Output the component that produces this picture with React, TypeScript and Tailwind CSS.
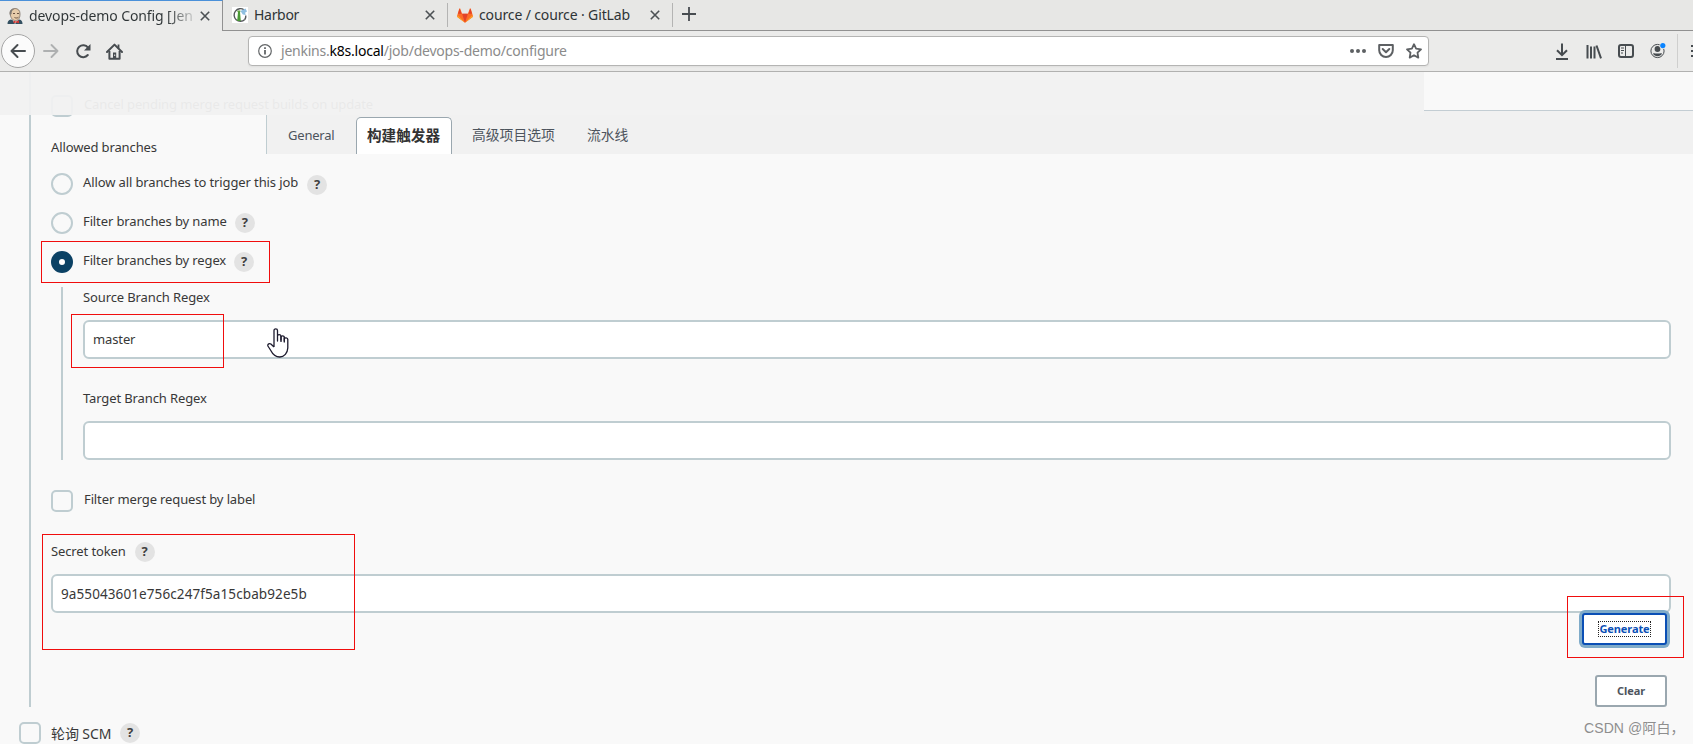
import React from 'react';
import clsx from 'clsx';

const CloseIcon = () => (
  <svg className="w-[10px] h-[10px] shrink-0" viewBox="0 0 10 10" fill="none" stroke="#4c5154" strokeWidth="1.6">
    <path d="M.8.8l8.4 8.4M9.2.8L.8 9.2" />
  </svg>
);

const JenkinsIcon = () => (
  <svg className="w-4 h-4 shrink-0" viewBox="0 0 16 16">
    <path d="M.5 16c0-2.500 1-4 3.500-4.500L8 13l4.500-1.500c2 .5 3 2 3 4.500z" fill="#335061" />
    <path d="M5 11l3 5 3-4-1-2z" fill="#fff" />
    <path d="M3 5C3 2 5 .5 8 .5S13.200 2.500 13 6c0 4-1.500 6.500-4.500 6.500S3.500 10 3 5z" fill="#e6cba9" stroke="#6b5f55" strokeWidth=".7" />
    <path d="M3 7C2 3 4 .8 7.500 1 5 2.200 4.500 3.500 4.600 6z" fill="#7d7873" />
    <path d="M6 5.500h2M10 5.500h2M7.500 9.500c1.500.8 3 .6 4-.3" stroke="#5a4336" strokeWidth=".9" fill="none" />
    <path d="M6.500 12.500l2.500 1 3-1.200v3L9 14.500l-2.500.8z" fill="#d33833" />
  </svg>
);

const HarborIcon = () => (
  <svg className="w-4 h-4 shrink-0 bg-white" viewBox="0 0 16 16">
    <path d="M12.800 12.500A6.300 6.300 0 1 1 12 2.800" fill="none" stroke="#55595b" strokeWidth="1.400" />
    <path d="M13.800 8.500a6 6 0 0 1-1 4" fill="none" stroke="#55595b" strokeWidth="1.400" />
    <path d="M6 5h2l.8 9H5.200z" fill="#4a9a35" />
    <path d="M5.400 3.500h3v1.600h-3z" fill="#5c9f3c" />
    <path d="M8.500 4l5-2.500 1.500 3-2 1.200.8 2.300-3-.5z" fill="#8fbfe0" />
  </svg>
);

const GitlabIcon = () => (
  <svg className="w-4 h-[15px] shrink-0" viewBox="0 0 16 15">
    <path d="M8 14.700L.3 9 .1 7.800 2.300.6h.9L5.100 5.800h5.800L12.800.6h.9l2.200 7.200-.2 1.200z" fill="#fc6d26" />
    <path d="M8 14.700L5.100 5.800h5.800z" fill="#e24329" />
    <path d="M8 14.700L.3 9l.5-1.800zM8 14.700L15.700 9l-.5-1.800z" fill="#fca326" />
    <path d="M1 5.800L2.600.5l2 5.300zM15 5.800L13.400.5l-2 5.300z" fill="#e24329" />
  </svg>
);

const BackIcon = () => (
  <svg className="w-4 h-4" viewBox="0 0 16 16" fill="none" stroke="currentColor" strokeWidth="2" strokeLinecap="round" strokeLinejoin="round">
    <path d="M15 8H1.500M7.500 2L1.500 8l6 6" />
  </svg>
);

const ForwardIcon = () => (
  <svg className="w-4 h-4" viewBox="0 0 16 16" fill="none" stroke="currentColor" strokeWidth="1.900" strokeLinecap="round" strokeLinejoin="round">
    <path d="M1 8h13.500M8.500 2l6 6-6 6" />
  </svg>
);

const ReloadIcon = () => (
  <svg className="w-4 h-4" viewBox="0 0 16 16" fill="none" stroke="#474c50" strokeWidth="2">
    <path d="M12.800 12A6 6 0 1 1 13 4.600" strokeLinecap="round" />
    <path d="M15.500 1v6.500H9z" fill="#474c50" stroke="none" />
  </svg>
);

const HomeIcon = () => (
  <svg className="w-[17px] h-[17px]" viewBox="0 0 17 17" fill="none" stroke="#474c50" strokeWidth="2" strokeLinejoin="round">
    <path d="M1 9l7.500-7.400L16 9" strokeLinecap="round" />
    <path d="M3.400 8v7.800h10.200V8" />
    <path d="M12.500 1.500v4" strokeWidth="1.800" />
    <path d="M7 15.500V9.500h3.200v6z" fill="#474c50" stroke="none" />
    <path d="M8.200 11.500h1v1.500h-1z" fill="#ebebea" stroke="none" />
  </svg>
);

const InfoIcon = () => (
  <svg className="w-[14px] h-[14px] shrink-0" viewBox="0 0 14 14" fill="none" stroke="#636668" strokeWidth="1.200">
    <circle cx="7" cy="7" r="6.300" />
    <path d="M7 6v4.500M7 3.200V5" strokeWidth="1.800" />
  </svg>
);

const PocketIcon = () => (
  <svg className="w-4 h-[14px]" viewBox="0 0 16 14" fill="none" stroke="#5d6063" strokeWidth="2" strokeLinejoin="round">
    <path d="M1.200 1h13.600v5.200a6.800 6.800 0 0 1-13.600 0z" />
    <path d="M4.700 5L8 8.200 11.300 5" strokeLinecap="round" />
  </svg>
);

const StarIcon = () => (
  <svg className="w-4 h-4" viewBox="0 0 16 16" fill="none" stroke="#5d6063" strokeWidth="1.800" strokeLinejoin="round">
    <path d="M8 1.200l2.100 4.400 4.900.7-3.500 3.400.8 4.900L8 12.200l-4.300 2.400.8-4.900L1 6.300l4.900-.7z" />
  </svg>
);

const DownloadIcon = () => (
  <svg className="w-[14px] h-[17px]" viewBox="0 0 14 17" fill="none" stroke="#474c50" strokeWidth="2">
    <path d="M7 .5v11M2 7.200l5 5 5-5M1 16h12" />
  </svg>
);

const LibraryIcon = () => (
  <svg className="w-4 h-[15px]" viewBox="0 0 16 15" fill="none" stroke="#474c50" strokeWidth="2">
    <path d="M1.500 1v13.500M5 2.500v12M8.500 2.500v12M10.500 1.500l4.500 12.800" />
  </svg>
);

const SidebarIcon = () => (
  <svg className="w-4 h-[14px]" viewBox="0 0 16 14" fill="none" stroke="#474c50" strokeWidth="2">
    <rect x="1" y="1" width="14" height="12" rx="2" />
    <path d="M7.500 1v12" strokeWidth="1" />
    <path d="M3 4h3M3 6.500h3M3 9h2" strokeWidth="1" />
  </svg>
);

const AccountIcon = () => (
  <svg className="w-4 h-4 overflow-visible" viewBox="0 0 16 16">
    <circle cx="7.500" cy="8" r="6.600" fill="none" stroke="#474c50" strokeWidth="1" />
    <circle cx="7.500" cy="6" r="2.900" fill="#474c50" />
    <path d="M3 10.400c1.200-.4 1.500.2 4.500.2s3.300-.6 4.500-.2c-.8 1.800-2.500 2.800-4.500 2.800S3.800 12.200 3 10.400z" fill="#474c50" />
    <circle cx="12.800" cy="2.800" r="3.300" fill="#ebebea" />
    <circle cx="12.800" cy="2.600" r="2.600" fill="#0a84ff" />
  </svg>
);

const HandCursor = () => (
  <svg className="absolute left-[267px] top-[328px] w-[22px] h-[30px]" viewBox="0 0 22 30" fill="#fff" stroke="#1d1b2e" strokeWidth="1.300" strokeLinejoin="round">
    <path d="M7 19V2.500C7 .3 10.500.3 10.500 2.500V13 8c0-1.800 3.200-1.800 3.500 0v4-3c.3-1.600 3-1.400 3.300 0v4-2.200c.5-1.500 3.300-1.200 3.500.5V20c-.3 5-3.500 9-8 9-4.800 0-7-2.500-9-6.500L.9 18c-.5-2 1.600-3 3-2L7 19" />
    <path d="M14 8v6M17.300 9.500v5" />
  </svg>
);

function BrowserTabs() {
  return (
    <div className="flex h-[31px] bg-[#e7e7e5] text-sm text-[#2e3436]">
      <div className="flex items-center w-[223px] border-t border-t-[#4a90d9] border-r border-r-[#919191] bg-[#ebebea] pl-[7px] pr-[12px]">
        <JenkinsIcon />
        <span className="ml-[6px] whitespace-nowrap tracking-[-0.1px] bg-[linear-gradient(90deg,#2e3436_84%,#2e343630_100%)] bg-clip-text text-transparent">
          devops-demo Config [Jen
        </span>
        <span className="ml-auto flex"><CloseIcon /></span>
      </div>
      <div className="flex items-center w-[225px] border-b border-[#919191] pl-[9px]">
        <HarborIcon />
        <span className="ml-[6px] tracking-[-0.3px]">Harbor</span>
        <span className="ml-auto mr-[12px] flex"><CloseIcon /></span>
        <span className="w-px h-6 bg-[#b4b4b3]" />
      </div>
      <div className="flex items-center w-[225px] border-b border-[#919191] pl-[9px]">
        <GitlabIcon />
        <span className="ml-[6px] tracking-[-0.13px]">cource / cource · GitLab</span>
        <span className="ml-auto mr-[12px] flex"><CloseIcon /></span>
        <span className="w-px h-6 bg-[#b4b4b3]" />
      </div>
      <div className="flex flex-1 items-center border-b border-[#919191] pl-[9px]">
        <svg className="w-[14px] h-[14px] -mt-0.5" viewBox="0 0 14 14" stroke="#474c50" strokeWidth="1.800">
          <path d="M7 0v14M0 7h14" />
        </svg>
      </div>
    </div>
  );
}

function Toolbar() {
  return (
    <div className="flex h-[41px] items-center overflow-hidden border-b border-[#b1b1b0] bg-[#ebebea]">
      <div className="flex w-[248px] shrink-0 items-center pl-px">
        <span className="flex h-[34px] w-[34px] items-center justify-center rounded-full border border-[#a5a5a5] bg-[#fbfbfb] text-[#474c50]">
          <BackIcon />
        </span>
        <span className="ml-2 text-[#aeb0b1]"><ForwardIcon /></span>
        <span className="ml-4"><ReloadIcon /></span>
        <span className="ml-[15px]"><HomeIcon /></span>
      </div>
      <div className="flex h-[30px] w-[1181px] shrink-0 items-center rounded border border-[#b4b4b3] bg-white pl-[9px] pr-[6px] text-sm text-[#8b8b8b] shadow-xs">
        <InfoIcon />
        <span className="ml-[9px] tracking-[-0.23px] whitespace-nowrap">
          jenkins.<span className="text-black">k8s.local</span>/job/devops-demo/configure
        </span>
        <div className="ml-auto flex items-center gap-3">
          <svg className="w-4 h-1" viewBox="0 0 16 4" fill="#5d6063">
            <circle cx="2" cy="2" r="2" /><circle cx="8" cy="2" r="2" /><circle cx="14" cy="2" r="2" />
          </svg>
          <PocketIcon />
          <StarIcon />
        </div>
      </div>
      <div className="ml-[126px] flex shrink-0 items-center">
        <DownloadIcon />
        <span className="ml-[17px]"><LibraryIcon /></span>
        <span className="ml-4"><SidebarIcon /></span>
        <span className="ml-4"><AccountIcon /></span>
        <span className="ml-[11px] h-[34px] w-px bg-[#cfcfce]" />
        <svg className="ml-[13px] w-4 h-3" viewBox="0 0 16 12" stroke="#474c50" strokeWidth="2">
          <path d="M0 1h16M0 6h16M0 11h16" />
        </svg>
      </div>
    </div>
  );
}

const sections = ['General', '构建触发器', '高级项目选项', '流水线'];

// sticky header of the config form, floats above the scrolled content
function StickyHeader() {
  return (
    <div className="absolute left-0 top-[72px] w-full">
      <div className="flex h-[43px]">
        <div className="w-[1424px] bg-[#f1f1f1]/94" />
        <div className="flex flex-1 flex-col bg-[#f9f9f9]">
          <div className="h-[39px] border-b border-[#c3cdd3]" />
          <div className="h-1 bg-[#f1f1f1]" />
        </div>
      </div>
      <div className="ml-[266px] flex h-[39px] items-end border-l border-[#bfcdd1] bg-[#f1f1f1] pl-[21px] text-[#4d545d]">
        <span className="w-[68px] pb-[9px] text-[13px] leading-5 tracking-[-0.2px]">{sections[0]}</span>
        <span className="flex h-[37px] w-24 items-center justify-center rounded-t-[5px] border border-b-0 border-[#9aa7af] bg-white pr-px text-[14.6px] font-bold text-[#333]">
          {sections[1]}
        </span>
        <span className="ml-5 w-[115px] pb-[9px] text-[13.800px] leading-5">{sections[2]}</span>
        <span className="pb-[9px] text-[13.800px] leading-5">{sections[3]}</span>
      </div>
    </div>
  );
}

const Help = ({ className }: { className?: string }) => (
  <span className={clsx('flex h-5 w-5 items-center justify-center rounded-full bg-[#e3e3e3] text-[13px] font-bold text-[#3f3f3f]', className)}>?</span>
);

const Checkbox = () => <span className="h-[22px] w-[22px] shrink-0 rounded-[5px] border-2 border-[#bfcdd1] bg-[#f9f9f9]" />;

const TextField = ({ value }: { value?: string }) => (
  <div className="flex h-[39px] items-center rounded-[6px] border-2 border-[#bfcdd1] bg-white px-2">{value}</div>
);

interface RadioRowProps {
  label: string;
  checked?: boolean;
  helpClass?: string;
}

const RadioRow = ({ label, checked, helpClass }: RadioRowProps) => (
  <div className="flex h-[39px] items-center">
    <span
      className={clsx(
        'h-[22px] w-[22px] rounded-full',
        checked ? 'border-8 border-[#0b4164] bg-white' : 'border-2 border-[#bfcdd1] bg-[#f9f9f9]'
      )}
    />
    <span className="ml-[10px] pb-px">{label}</span>
    <Help className={clsx('ml-2', helpClass)} />
  </div>
);

function ConfigForm() {
  return (
    <div className="h-[672px] overflow-hidden pl-[29px] pr-[22px]">
      <div className="h-[635px] border-l-2 border-[#bfcdd1] pl-5">
        <div className="flex h-[43px] items-end">
          <div className="flex h-[21px] items-center -mb-px">
            <Checkbox />
            <span className="ml-[11px] pb-px text-[#666]">Cancel pending merge request builds on update</span>
          </div>
        </div>
        <div className="h-[49px] pt-[22px] leading-5">Allowed branches</div>
        <RadioRow label="Allow all branches to trigger this job" helpClass="ml-[9px] mt-[3px]" />
        <RadioRow label="Filter branches by name" helpClass="mt-px" />
        <RadioRow label="Filter branches by regex" checked helpClass="mt-px" />
        <div className="ml-[10px] mt-[6px] h-[173px] border-l-2 border-[#bfcdd1] pl-5">
          <div className="h-[33px] leading-5">Source Branch Regex</div>
          <TextField value="master" />
          <div className="h-[62px] pt-[29px] leading-5">Target Branch Regex</div>
          <TextField />
        </div>
        <div className="mt-[30px] flex items-center">
          <Checkbox />
          <span className="ml-[11px] pb-0.5">Filter merge request by label</span>
        </div>
        <div className="mt-[30px] flex h-5 items-center">
          <span className="pb-px">Secret token</span>
          <Help className="ml-[9px]" />
        </div>
        <div className="mt-3 text-[13.5px] leading-[18px] tracking-[0.1px]">
          <TextField value="9a55043601e756c247f5a15cbab92e5b" />
        </div>
        <div className="flex flex-col items-end pr-1 text-[11px] font-bold tracking-[-0.1px]">
          <button className="flex h-8 w-[85px] items-center justify-center rounded-[3px] border-2 border-[#0b4fb5] bg-white text-[#0b4fb5] shadow-[0_0_0_3px_#7fabc9]">
            <span className="flex h-4 w-[53px] items-center justify-center border border-dotted border-[#222]">Generate</span>
          </button>
          <button className="mt-[30px] flex h-8 w-[72px] items-center justify-center rounded-[3px] border-2 border-[#9aa7af] bg-white text-[#4d545d]">
            Clear
          </button>
        </div>
      </div>
      <div className="-ml-[10px] mt-[15px] flex items-center">
        <Checkbox />
        <span className="ml-[10px] w-[61px] whitespace-nowrap text-[14px] tracking-[-0.1px]">轮询 SCM</span>
        <Help className="ml-2" />
      </div>
    </div>
  );
}

export default function App() {
  return (
    <div className="relative h-[744px] w-[1693px] overflow-hidden bg-[#f9f9f9] font-['Noto_Sans','Noto_Sans_CJK_SC',sans-serif]">
      <BrowserTabs />
      <Toolbar />
      <div className="text-[13px] tracking-[-0.12px] text-[#383838]">
        <ConfigForm />
      </div>
      <StickyHeader />
      <HandCursor />

      {/* red highlight frames */}
      <div className="absolute left-[41px] top-[241px] h-[42px] w-[229px] border border-[#f00d0d]" />
      <div className="absolute left-[71px] top-[314px] h-[54px] w-[153px] border border-[#f00d0d]" />
      <div className="absolute left-[42px] top-[534px] h-[116px] w-[313px] border border-[#f00d0d]" />
      <div className="absolute left-[1567px] top-[596px] h-[62px] w-[117px] border border-[#f00d0d]" />

      <span className="absolute left-[1584px] top-[717px] whitespace-nowrap font-['Liberation_Sans','Noto_Sans_CJK_SC',sans-serif] text-[14px] leading-[22px] tracking-[0.1px] text-[#8e8e8e]">
        CSDN @阿白，
      </span>
    </div>
  );
}
